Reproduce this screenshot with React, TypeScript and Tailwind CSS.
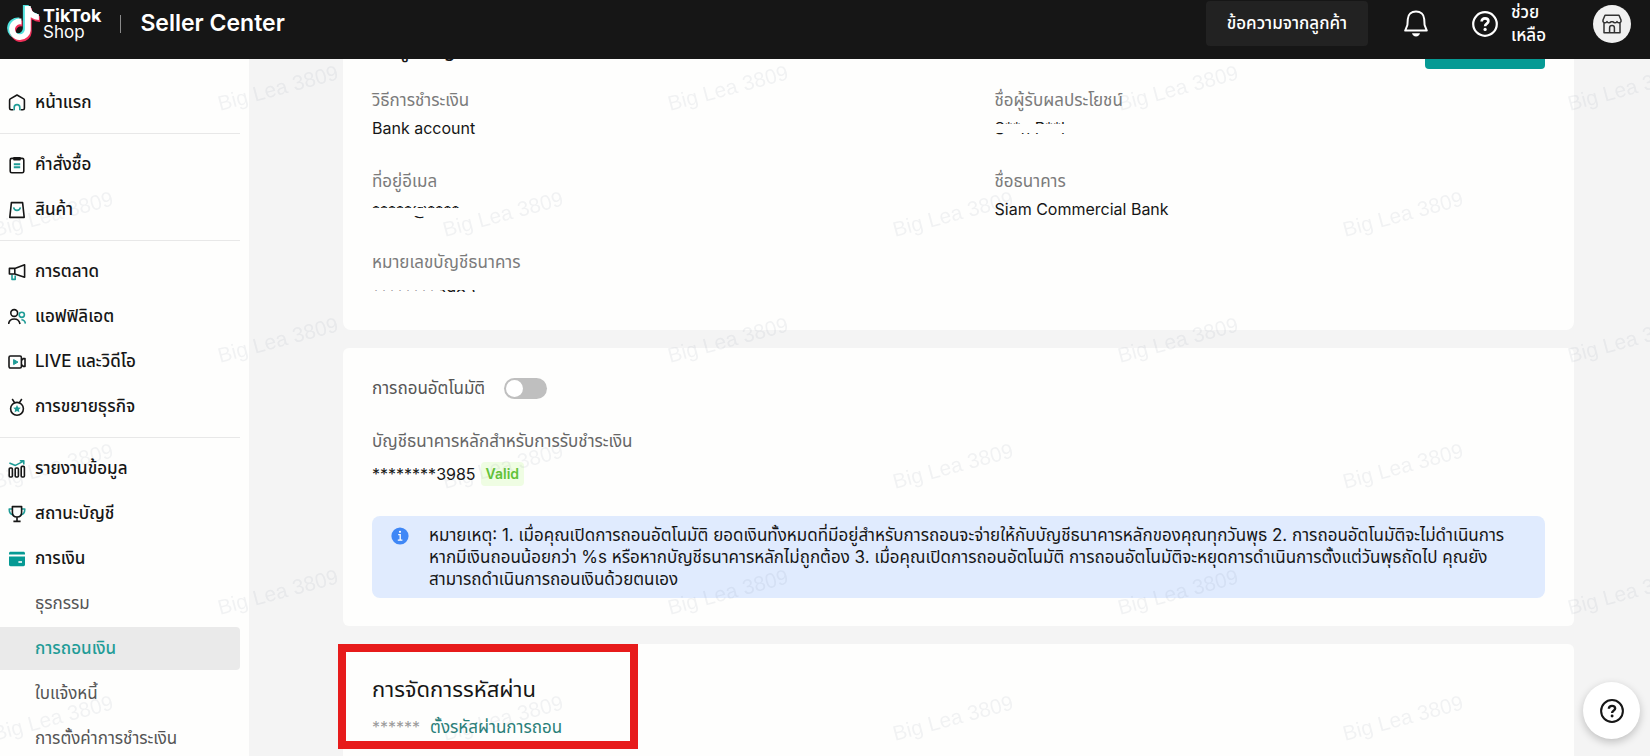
import React, { useState } from 'react';
import { FaTiktok } from 'react-icons/fa6';

const TEAL = '#1f9c97';

const icons: Record<string, React.ReactNode> = {
    home: (
        <>
            <path d="M5.4 15.8H3.2c-1 0-1.6-.6-1.6-1.6V6.200c0-.5.2-1 .7-1.300L9 1l6.700 3.900c.5.3.7.8.7 1.300v8c0 1-.6 1.600-1.600 1.600h-2.200" />
            <path d="M6.200 16.200v-2.800a2.800 2.800 0 0 1 5.600 0v2.800" stroke={TEAL} />
        </>
    ),
    orders: (
        <>
            <rect x="2.2" y="2.4" width="13.6" height="14.4" rx="1.6" />
            <path d="M6 1.8h6v2H6z" />
            <path d="M5.8 8.2h6.4M5.8 11.2h6.4" stroke={TEAL} strokeWidth="2" />
        </>
    ),
    products: (
        <>
            <path d="M3.4 1.6h11.2l1.6 14.8H1.8z" />
            <path d="M5.6 6.4c.8 4 6 4 6.8 0" stroke={TEAL} />
        </>
    ),
    marketing: (
        <>
            <path d="M4 11.4v5h3.2v-4" stroke={TEAL} />
            <path d="M1.4 5.4h5.4l9.8-3.6v12.4l-9.8-3.2H1.4zM6.8 5.4V11" />
        </>
    ),
    affiliate: (
        <>
            <circle cx="6.2" cy="5" r="3.4" />
            <path d="M.6 16c.4-3.2 2.6-5 5.6-5s5.2 1.8 5.8 5" />
            <circle cx="13.8" cy="6.8" r="2.6" stroke={TEAL} />
            <path d="M13.4 11.8c2.2 0 3.6 1.4 4 3.8" stroke={TEAL} />
        </>
    ),
    live: (
        <>
            <rect x="1" y="3" width="12.4" height="12" rx="1.4" />
            <path d="M13.4 7.4l1.800-1.800h1.800v7.800h-1.800l-1.800-1.800" />
            <path d="M5.6 6.6v5l4.4-2.5z" fill={TEAL} stroke={TEAL} strokeWidth="1" />
        </>
    ),
    growth: (
        <>
            <circle cx="9" cy="10.8" r="6.4" />
            <path d="M4.2 1l2.2 3.4M13.8 1l-2.2 3.4" />
            <path d="M9 7l1.2 2.4 2.6.4-1.9 1.8.5 2.6L9 13l-2.4 1.2.5-2.6-1.9-1.8 2.6-.4z" fill={TEAL} stroke="none" />
        </>
    ),
    data: (
        <>
            <rect x="1.2" y="8" width="3.2" height="9" rx="1" />
            <rect x="7.2" y="8" width="3.2" height="9" rx="1" />
            <rect x="13.2" y="6.4" width="3.2" height="10.6" rx="1" />
            <path d="M1.4 3l6 2.4 7.8-4M11.8.8h4v3.6" stroke={TEAL} />
        </>
    ),
    health: (
        <>
            <path d="M4.4 4H1.2c0 3.4 1.4 5.6 4.4 6M13.6 4h3.2c0 3.4-1.4 5.6-4.4 6" stroke={TEAL} />
            <path d="M4.4 1.6h9.2v5.8c0 2.8-2 4.6-4.6 4.6s-4.6-1.8-4.6-4.6zM9 12v4.2M5.4 16.4h7.2" />
        </>
    ),
    finance: (
        <>
            <path d="M1 3.4c0-1 .6-1.6 1.6-1.6h12.8c1 0 1.6.6 1.6 1.6v1.2H1zM1 6.4h16v8.2c0 1-.6 1.6-1.6 1.6H2.6c-1 0-1.6-.6-1.6-1.6z" fill="#069a94" stroke="none" />
            <path d="M10.4 12h3.6" stroke="#fff" />
        </>
    ),
};

const menu = [
    [{ icon: 'home', label: 'หน้าแรก' }],
    [
        { icon: 'orders', label: 'คำสั่งซื้อ' },
        { icon: 'products', label: 'สินค้า' },
    ],
    [
        { icon: 'marketing', label: 'การตลาด' },
        { icon: 'affiliate', label: 'แอฟฟิลิเอต' },
        { icon: 'live', label: 'LIVE และวิดีโอ' },
        { icon: 'growth', label: 'การขยายธุรกิจ' },
    ],
    [
        { icon: 'data', label: 'รายงานข้อมูล' },
        { icon: 'health', label: 'สถานะบัญชี' },
        { icon: 'finance', label: 'การเงิน' },
    ],
];

const financeMenu = ['ธุรกรรม', 'การถอนเงิน', 'ใบแจ้งหนี้', 'การตั้งค่าการชำระเงิน'];

const MenuIcon = ({ name }: { name: string }) => (
    <svg viewBox="0 0 18 18" className="w-[18px] h-[18px] shrink-0" fill="none" stroke="#161616" strokeWidth="1.6" strokeLinejoin="round" aria-hidden="true">
        {icons[name]}
    </svg>
);

const HelpIcon = ({ className }: { className: string }) => (
    <svg viewBox="0 0 26 26" className={className} fill="none" stroke="currentColor" strokeWidth="2.2" aria-hidden="true">
        <circle cx="13" cy="13" r="11.8" />
        <path d="M9.6 10.6c0-2 1.4-3.2 3.4-3.2s3.4 1.2 3.4 2.9c0 2.3-3.3 2.4-3.3 4.9" strokeWidth="2.6" />
        <circle cx="13.1" cy="18.4" r="1.6" fill="currentColor" stroke="none" />
    </svg>
);

const Logo = () => (
    <div className="flex items-center gap-[3px]">
        <div className="relative w-[33px] h-[37px]">
            <FaTiktok className="absolute left-0 top-0 w-[30px] h-[34px] text-[#4fe0dc]" />
            <FaTiktok className="absolute left-[3px] top-[3px] w-[30px] h-[34px] text-[#ee2f58]" />
            <FaTiktok className="absolute left-0.5 top-px w-[30px] h-[34px] text-white" />
        </div>
        <div className="text-white">
            <div className="text-[18px] leading-[17px] font-bold">TikTok</div>
            <div className="text-[17px] leading-[17px]">Shop</div>
        </div>
    </div>
);

const Header = () => (
    <header className="h-[59px] shrink-0 bg-[#161616] text-white flex items-start justify-between pl-[7px] pr-[19px] relative z-10">
        <div className="flex items-center h-[47px]">
            <Logo />
            <span className="w-px h-[18px] bg-[#8a8a8a] mx-[19px]" />
            <h1 className="text-[23px] font-semibold">Seller Center</h1>
        </div>
        <div className="flex items-center h-[47px]">
            <button type="button" className="h-[45px] w-[162px] rounded bg-[#222222] text-[17px] font-medium mr-9">
                ข้อความจากลูกค้า
            </button>
            <button type="button" aria-label="การแจ้งเตือน" className="mr-11">
                <svg viewBox="0 0 24 27" className="w-6 h-[27px]" fill="none" stroke="#fff" strokeWidth="2" strokeLinejoin="round">
                    <path d="M12 1.400c-4.600 0-8 3-8.200 7.600L3.400 15l-2.200 5.600h21.600L20.600 15l-.4-6C20 4.400 16.600 1.400 12 1.400z" />
                    <path d="M8 23.200h8c-.4 2-1.900 3.200-4 3.200s-3.600-1.200-4-3.200z" fill="#fff" stroke="none" />
                </svg>
            </button>
            <button type="button" className="flex items-center gap-[13px] text-left mr-[47px]">
                <HelpIcon className="w-[26px] h-[26px]" />
                <span className="text-[17px] leading-[23px] font-medium">
                    ช่วย
                    <br />
                    เหลือ
                </span>
            </button>
            <button type="button" aria-label="ร้านค้า" className="w-[38px] h-[38px] rounded-full bg-[#f1f1f1] flex items-center justify-center">
                <svg viewBox="0 0 20 20" className="w-5 h-5" fill="none" stroke="#333" strokeWidth="1.5" strokeLinejoin="round">
                    <path d="M3 1.200h14l2 4.800v1.600c-1 1.600-3 1.600-4 0-1 1.600-3 1.600-4 .2h-2c-1 1.400-3 1.400-4-.2-1 1.600-3 1.600-4 0V6zM2 8.600V18.800h16V8.600" />
                    <path d="M7.600 18.800v-5c0-1.400 1-2.200 2.400-2.200s2.400.8 2.400 2.200v5" />
                </svg>
            </button>
        </div>
    </header>
);

const Sidebar = () => (
    <nav className="w-[249px] shrink-0 bg-[#fefefd] pt-[21px] pr-[9px] text-[17px] text-[#161616]">
        {menu.map((group, i) => (
            <ul key={i} className={i > 0 ? 'border-t border-[#e8e8e8] mt-2 pt-2' : ''}>
                {group.map((item) => (
                    <li key={item.label}>
                        <a href="#" className="flex items-center gap-[9px] h-[45px] pl-2 font-medium">
                            <MenuIcon name={item.icon} />
                            {item.label}
                        </a>
                    </li>
                ))}
            </ul>
        ))}
        <ul>
            {financeMenu.map((label) => (
                <li key={label} className="h-[45px] flex items-center">
                    <a
                        href="#"
                        className={`flex items-center h-[43px] w-full pl-[35px] rounded-r ${label === 'การถอนเงิน' ? 'bg-[#eaeaea] text-[#1f9c97] font-medium' : 'text-[#555555]'}`}
                    >
                        {label}
                    </a>
                </li>
            ))}
        </ul>
    </nav>
);

// strips: areas of the value that are hidden, top and height in px
const Field = ({ label, value, strips = [] }: { label: string; value: string; strips?: string[] }) => (
    <div>
        <dt className="text-[#7b7b7b] leading-6">{label}</dt>
        <dd className="relative mt-1 text-base leading-6 text-[#161616]">
            {value}
            {strips.map((s) => (
                <span key={s} className={`absolute left-0 w-full bg-[#fefefd] ${s}`} />
            ))}
        </dd>
    </div>
);

const Watermark = () => (
    <svg className="absolute inset-0 w-full h-full pointer-events-none" aria-hidden="true">
        <defs>
            <pattern id="mark" width="450" height="252" patternUnits="userSpaceOnUse">
                <g fill="#1b2340" fillOpacity="0.055" fontSize="21" fontFamily="'Liberation Sans', Arial, sans-serif">
                    <text transform="translate(220 52) rotate(-15)">Big Lea 3809</text>
                    <text transform="translate(-5 178) rotate(-15)">Big Lea 3809</text>
                    <text transform="translate(445 178) rotate(-15)">Big Lea 3809</text>
                </g>
            </pattern>
        </defs>
        <rect width="100%" height="100%" fill="url(#mark)" />
    </svg>
);

const App = () => {
    const [auto, setAuto] = useState(false);

    return (
        <div className="h-screen flex flex-col overflow-hidden bg-[#f4f4f4] font-[Inter,'Noto_Sans_Thai','Noto_Sans',sans-serif]">
            <Header />
            <div className="relative flex flex-1 min-h-0">
                <Sidebar />
                <main className="flex-1 min-w-0 overflow-hidden pl-[94px] pr-[76px] text-[17px]">
                    <section className="bg-[#fefefd] rounded-lg px-[29px] pb-7 -mt-[30px]">
                        <div className="flex justify-between items-start mb-[19px]">
                            <h2 className="text-[22px] leading-10 text-[#161616]">ข้อมูลบัญชี</h2>
                            <button type="button" aria-label="แก้ไข" className="w-[120px] h-10 rounded bg-[#069a94]" />
                        </div>
                        <dl className="grid grid-cols-2 gap-x-[72px] gap-y-[29px]">
                            <Field label="วิธีการชำระเงิน" value="Bank account" />
                            <Field label="ชื่อผู้รับผลประโยชน์" value="S**n P**l" strips={['top-2 h-[9px]']} />
                            <Field label="ที่อยู่อีเมล" value="*****@****" strips={['top-0 h-[9px]', 'top-[11px] h-2']} />
                            <Field label="ชื่อธนาคาร" value="Siam Commercial Bank" />
                            <Field label="หมายเลขบัญชีธนาคาร" value="********3985" strips={['top-0 h-3', 'top-[14px] h-[10px]']} />
                        </dl>
                    </section>

                    <section className="mt-[18px] bg-[#fefefd] rounded-md px-[29px] py-7">
                        <div className="flex items-center gap-[19px]">
                            <label htmlFor="auto-withdraw" className="leading-6 text-[#555555]">
                                การถอนอัตโนมัติ
                            </label>
                            <input
                                id="auto-withdraw"
                                type="checkbox"
                                role="switch"
                                checked={auto}
                                onChange={(e) => setAuto(e.target.checked)}
                                className="appearance-none w-[43px] h-[21px] rounded-full bg-[#bfbfbf] checked:bg-[#069a94] before:block before:w-[17px] before:h-[17px] before:m-0.5 before:rounded-full before:bg-white checked:before:ml-6"
                            />
                        </div>
                        <p className="mt-[29px] leading-6 text-[#666666]">บัญชีธนาคารหลักสำหรับการรับชำระเงิน</p>
                        <div className="mt-[9px] flex items-center gap-[5px]">
                            <span className="text-base text-[#161616]">********3985</span>
                            <span className="px-[5px] leading-6 rounded bg-[#effde3] text-[#62c338] text-sm font-semibold">Valid</span>
                        </div>
                        <div className="mt-[30px] flex items-start rounded-lg bg-[#e0ebfe] py-2 pl-[19px] pr-6 text-[#161616]">
                            <svg viewBox="0 0 18 18" className="w-[18px] h-[18px] mt-[3px] mr-5 shrink-0" aria-hidden="true">
                                <circle cx="9" cy="9" r="8.6" fill="#3f87f6" />
                                <path d="M7.2 7.6h2v5.4M6.8 13.2h4.6" stroke="#fff" strokeWidth="1.3" fill="none" />
                                <circle cx="9" cy="4.8" r="1.1" fill="#fff" />
                            </svg>
                            <p className="leading-[22px] whitespace-nowrap">
                                หมายเหตุ: 1. เมื่อคุณเปิดการถอนอัตโนมัติ ยอดเงินทั้งหมดที่มีอยู่สำหรับการถอนจะจ่ายให้กับบัญชีธนาคารหลักของคุณทุกวันพุธ 2. การถอนอัตโนมัติจะไม่ดำเนินการ
                                <br />
                                หากมีเงินถอนน้อยกว่า %s หรือหากบัญชีธนาคารหลักไม่ถูกต้อง 3. เมื่อคุณเปิดการถอนอัตโนมัติ การถอนอัตโนมัติจะหยุดการดำเนินการตั้งแต่วันพุธถัดไป คุณยัง
                                <br />
                                สามารถดำเนินการถอนเงินด้วยตนเอง
                            </p>
                        </div>
                    </section>

                    <section className="relative mt-[18px] bg-[#fefefd] rounded-md px-[29px] pt-7 pb-10">
                        <h2 className="text-[22px] leading-[34px] text-[#161616]">การจัดการรหัสผ่าน</h2>
                        <div className="mt-[9px] flex items-center gap-2.5 leading-6">
                            <span className="text-base text-[#9b9b9b]">******</span>
                            <a href="#" className="text-[#2a7f79]">
                                ตั้งรหัสผ่านการถอน
                            </a>
                        </div>
                        <div className="absolute -left-[5px] top-0 w-[300px] h-[105px] border-8 border-[#e71b1b]" />
                    </section>
                </main>
                <Watermark />
                <button
                    type="button"
                    aria-label="ช่วยเหลือ"
                    className="absolute right-[10px] bottom-[17px] w-[57px] h-[57px] rounded-full bg-white text-[#161616] shadow-[0_3px_8px_rgba(0,0,0,0.22)] flex items-center justify-center"
                >
                    <HelpIcon className="w-6 h-6" />
                </button>
            </div>
        </div>
    );
};

export default App;
